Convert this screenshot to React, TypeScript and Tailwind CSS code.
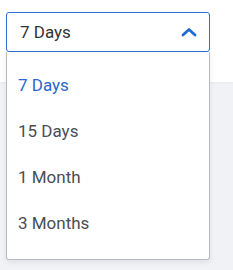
import React from "react";

export default function App() {
  const items = ["7 Days", "15 Days", "1 Month", "3 Months"];
  return (
    <div className="relative w-[233px] h-[270px] bg-[#f1f2f5] overflow-hidden" style={{ fontFamily: "Roboto, 'Liberation Sans', sans-serif" }}>
      <div className="h-[82px] bg-white shadow-[0_1px_2px_rgba(0,0,0,0.04)]" />
      <div className="absolute left-[6px] top-[12px] w-[204px]">
        <div className="h-[40px] flex items-center justify-between pl-[13px] pr-[11px] border border-[#2a6fcf] rounded-[3px] bg-white">
          <span className="text-[17px] text-[#333] leading-none">7 Days</span>
          <svg width="16" height="10" viewBox="0 0 16 10" className="mr-[1px]">
            <path d="M2 8 L8 2.5 L14 8" fill="none" stroke="#1f6bd1" strokeWidth="2.8" strokeLinecap="round" strokeLinejoin="round" />
          </svg>
        </div>
        <div className="border border-t-0 border-[#b8bcc2] rounded-b-[3px] bg-white shadow-[0_2px_6px_rgba(0,0,0,0.08)] pt-[11px] pb-[12px]">
          {items.map((it, i) => (
            <div key={it} className={`h-[46px] flex items-center pl-[11px] text-[17px] ${i === 0 ? "text-[#2a66cc]" : "text-[#4a4d52]"}`}>
              {it}
            </div>
          ))}
        </div>
      </div>
    </div>
  );
}
